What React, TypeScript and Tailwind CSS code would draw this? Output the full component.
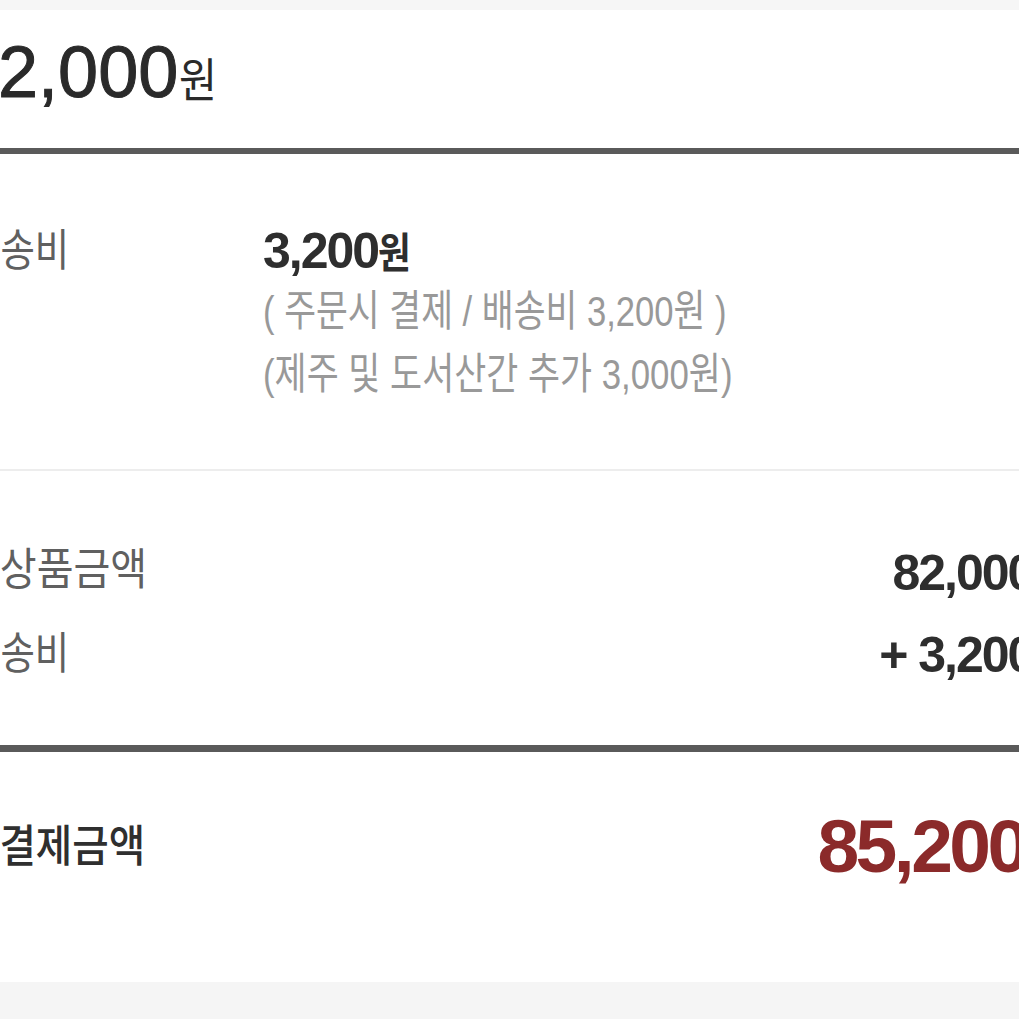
export default function App() {
  return (
    <div className="h-[1019px] w-[1019px] overflow-hidden bg-white font-['Liberation_Sans','Noto_Sans_CJK_KR',sans-serif]">
      <div className="h-[10px] bg-[#f6f6f6]" />

      {/* page is wider than the viewport: left and right edges are cut */}
      <div className="ml-[-37px] w-[1111px]">
        {/* product price */}
        <div className="h-[138px] pt-[26px]">
          <div className="ml-[-5px] text-[72px] leading-[72px] text-[#2a2a2a] [-webkit-text-stroke:1px_#2a2a2a]">
            82,000
            <span className="ml-[1px] inline-block origin-left scale-x-[0.88] text-[47px] leading-none [-webkit-text-stroke:0px]">원</span>
          </div>
        </div>
        <div className="h-[6px] bg-[#5a5a5a]" />

        {/* delivery */}
        <div className="h-[315px] pt-[72px]">
          <div className="flex items-baseline">
            <div className="w-[300px] shrink-0 text-[44px] leading-none text-[#606060]">
              <span className="ml-[3px] inline-block origin-left -translate-y-[2px] scale-x-[0.85]">배송비</span>
            </div>
            <div className="flex flex-col">
              <div className="text-[50px] font-bold leading-none tracking-[-2px] text-[#2e2e2e]">
                3,200
                <span className="inline-block origin-left scale-x-[0.85] text-[42px] tracking-normal">원</span>
              </div>
              <div className="mt-[3px] origin-left scale-x-[0.805] whitespace-nowrap text-[43px] leading-[64px] text-[#999999]">
                ( 주문시 결제 / 배송비 3,200원 )
              </div>
              <div className="origin-left scale-x-[0.81] whitespace-nowrap text-[43px] leading-[63px] text-[#999999]">
                (제주 및 도서산간 추가 3,000원)
              </div>
            </div>
          </div>
        </div>
        <div className="h-[2px] bg-[#ededed]" />

        {/* summary */}
        <div className="flex h-[274px] flex-col gap-[32px] pt-[77px]">
          <div className="flex items-baseline justify-between">
            <span className="inline-block origin-left -translate-y-[5px] scale-x-[0.91] text-[44px] leading-none text-[#606060]">총상품금액</span>
            <span className="mr-[8px] text-[50px] font-bold leading-none tracking-[-2px] text-[#2e2e2e]">
              82,000
              <span className="mr-[-6px] inline-block origin-left scale-x-[0.85] text-[42px] tracking-normal">원</span>
            </span>
          </div>
          <div className="flex items-baseline justify-between">
            <span className="ml-[3px] inline-block origin-left -translate-y-[3px] scale-x-[0.85] text-[44px] leading-none text-[#606060]">배송비</span>
            <span className="mr-[8px] text-[50px] font-bold leading-none tracking-[-2px] text-[#2e2e2e]">
              + 3,200
              <span className="mr-[-6px] inline-block origin-left scale-x-[0.85] text-[42px] tracking-normal">원</span>
            </span>
          </div>
        </div>
        <div className="h-[7px] bg-[#5a5a5a]" />

        {/* total */}
        <div className="h-[230px] pt-[57px]">
          <div className="flex items-baseline justify-between">
            <span className="inline-block origin-left -translate-y-[10px] scale-x-[0.9] text-[44px] font-medium leading-none text-[#2f2f2f]">총결제금액</span>
            <span className="mr-[2px] text-[75px] font-bold leading-none tracking-[-3.5px] text-[#8b2a2a]">
              85,200
              <span className="mr-[-9px] inline-block origin-left scale-x-[0.85] text-[60px] tracking-normal">원</span>
            </span>
          </div>
        </div>
      </div>

      <div className="h-[40px] bg-[#f5f5f5]" />
    </div>
  );
}
